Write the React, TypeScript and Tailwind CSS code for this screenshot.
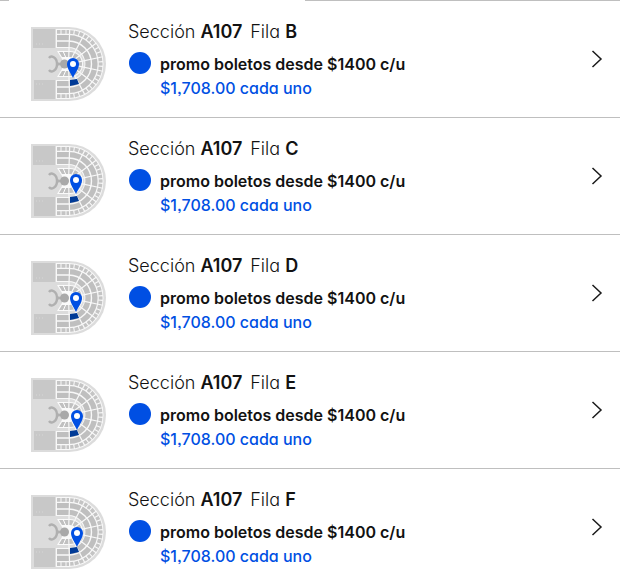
interface Ticket {
  section: string;
  row: string;
  offer: string;
  price: string;
  pin: { x: number; y: number };
}

const offer = "promo boletos desde $1400 c/u";
const price = "$1,708.00 cada uno";

const tickets: Ticket[] = [
  { section: "A107", row: "B", offer, price, pin: { x: 43, y: 52 } },
  { section: "A107", row: "C", offer, price, pin: { x: 46, y: 51 } },
  { section: "A107", row: "D", offer, price, pin: { x: 46, y: 52 } },
  { section: "A107", row: "E", offer, price, pin: { x: 47, y: 53 } },
  { section: "A107", row: "F", offer, price, pin: { x: 47, y: 53 } },
];

// a seating ring: straight stands on the left, half circle on the right
const ring = (r: number, x = 27) => `M${x} ${38 - r}H38.5A${r} ${r} 0 0 1 38.5 ${38 + r}H${x}`;

const spoke = (deg: number, from: number, to: number) => {
  const a = (deg * Math.PI) / 180;
  return `M${38.5 + from * Math.cos(a)} ${38 + from * Math.sin(a)}L${38.5 + to * Math.cos(a)} ${38 + to * Math.sin(a)}`;
};

const aisles = [-88, -62, -37, -12, 12, 37, 62, 88];
const outerAisles = [-80, -71, -54, -46, -29, -21, -4, 4, 21, 29, 46, 54, 71, 80];

function VenueMap({ pin }: { pin: Ticket["pin"] }) {
  return (
    <svg viewBox="0 0 76 76" className="size-19 shrink-0" fill="none" aria-hidden="true">
      <path d="M1 1H39A37 37 0 0 1 39 75H1Z" fill="#dcdcdc" />
      <path d="M3 3H25V22H3ZM4 54H25V73H4Z" fill="#c8c8c8" />
      <path d="M6 18H14M6 58H14" stroke="#d6d6d6" strokeDasharray="1 2" />
      <path d={ring(25.5, 26)} stroke="#f8f8f8" strokeWidth="19" />
      <path d={ring(32.2)} stroke="#c4c4c4" strokeWidth="3.8" />
      <path d={ring(26.4)} stroke="#bfbfbf" strokeWidth="5.4" />
      <path d={ring(19.6)} stroke="#bfbfbf" strokeWidth="5.4" />
      <path d="M27 25H40A13 13 0 0 1 40 51H27L32 43V33Z" fill="#fafafa" />
      <path d="M29 26H40A12 12 0 0 1 40 50H29L32 45H40A7 7 0 0 0 40 31H32Z" fill="#c0c0c0" />
      <path d="M33 25L36 32M33 51L36 44" stroke="#fff" />
      <path d={aisles.map((deg) => spoke(deg, 7, 35)).join("")} stroke="#f8f8f8" strokeWidth="1.2" />
      <path d={outerAisles.map((deg) => spoke(deg, 29.5, 34.5)).join("")} stroke="#f8f8f8" strokeWidth="1.1" />
      <path d="M31 3V8M36 3V8M31 68V73M36 68V73" stroke="#f8f8f8" />
      <path d="M19 32C21 29 27 31 27 38S21 47 19 44" stroke="#b0b0b0" strokeWidth="2.4" />
      <path d="M26 36L31 37V39L26 40Z" fill="#b0b0b0" />
      <circle cx="34.5" cy="38" r="4.5" fill="#a9a9a9" />
      <path d="M40 54L47 53L49 58L40 60Z" fill="#003a96" />
      <g transform={`translate(${pin.x} ${pin.y})`}>
        <path d="M0 0C-2-5-6-9-6-14A6 6 0 0 1 6-14C6-9 2-5 0 0Z" fill="#004fe3" />
        <circle cx="0" cy="-14" r="3" fill="#fff" />
      </g>
    </svg>
  );
}

function TicketRow({ ticket }: { ticket: Ticket }) {
  return (
    <li className="border-b border-[#bfbfbf]">
      <button type="button" className="flex w-full cursor-pointer items-start pt-[17px] pr-4 pb-[15px] pl-[30px] text-left">
        <span className="pt-2">
          <VenueMap pin={ticket.pin} />
        </span>
        <span className="ml-[22px] flex min-w-0 flex-1 flex-col">
          <span className="text-lg leading-7 font-light">
            Sección <b className="font-semibold">{ticket.section}</b>
            <span className="ml-2">
              Fila <b className="font-semibold">{ticket.row}</b>
            </span>
          </span>
          <span className="mt-1.5 flex gap-[9px]">
            <span className="ml-px size-[22px] shrink-0 rounded-full bg-[#004fe3]" />
            <span className="flex flex-col text-base leading-6 font-semibold">
              <span>{ticket.offer}</span>
              <span className="font-medium text-[#004fe3]">{ticket.price}</span>
            </span>
          </span>
        </span>
        <svg viewBox="0 0 12 18" className="mt-8 mr-px h-[18px] w-3 shrink-0" fill="none" aria-hidden="true">
          <path d="M1.5 1L10 9L1.5 17" stroke="#1a1a1a" strokeWidth="1.5" />
        </svg>
      </button>
    </li>
  );
}

export default function App() {
  return (
    <main className="bg-white font-['Inter',sans-serif] text-[#121212] [font-feature-settings:'cv11','ss03']">
      <div className="flex h-px justify-between">
        <span className="w-[9px] bg-[#bfbfbf]" />
        <span className="ml-[296px] flex-1 bg-[#bfbfbf]" />
      </div>
      <ul>
        {tickets.map((ticket) => (
          <TicketRow key={ticket.row} ticket={ticket} />
        ))}
      </ul>
    </main>
  );
}
